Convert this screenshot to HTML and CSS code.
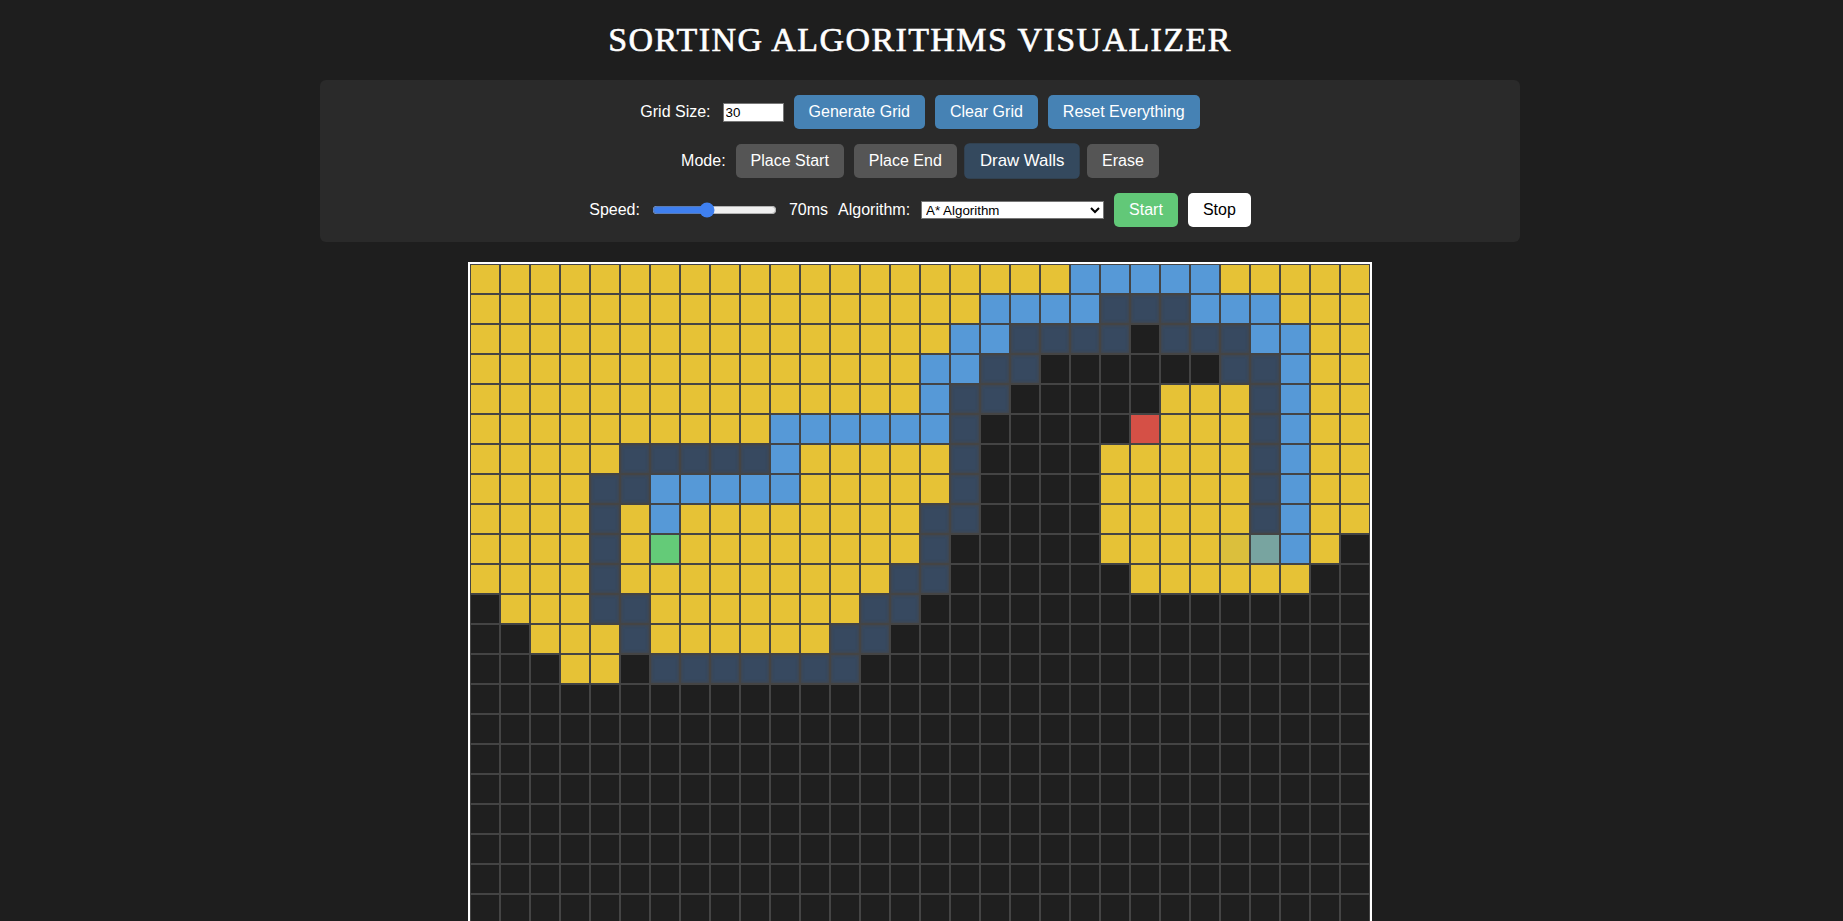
FILE: index.html
```html
<!DOCTYPE html>
<html lang="en">
<head>
<meta charset="utf-8">
<title>Sorting Algorithms Visualizer</title>
<link rel="stylesheet" href="styles.css">
</head>
<body>
<h1 class="title">SORTING ALGORITHMS VISUALIZER</h1>
<div class="controls">
  <div class="row">
    <label class="label" for="size">Grid Size:</label>
    <input class="size-input" id="size" type="text" value="30">
    <button class="btn btn-blue">Generate Grid</button>
    <button class="btn btn-blue">Clear Grid</button>
    <button class="btn btn-blue">Reset Everything</button>
  </div>
  <div class="row">
    <span class="label">Mode:</span>
    <button class="btn btn-gray">Place Start</button>
    <button class="btn btn-gray">Place End</button>
    <button class="btn btn-gray btn-active">Draw Walls</button>
    <button class="btn btn-gray">Erase</button>
  </div>
  <div class="row">
    <label class="label" for="speed">Speed:</label>
    <input class="speed" id="speed" type="range" min="10" max="150" value="70">
    <span class="label">70ms</span>
    <label class="label" for="algo">Algorithm:</label>
    <select class="algo" id="algo">
      <option>A* Algorithm</option>
      <option>Dijkstra's Algorithm</option>
      <option>Breadth-First Search</option>
      <option>Depth-First Search</option>
    </select>
    <button class="btn btn-green">Start</button>
    <button class="btn btn-white">Stop</button>
  </div>
</div>
<div class="grid" id="grid"></div>
<script src="script.js"></script>
</body>
</html>
```

FILE: styles.css
```css
html, body {
  margin: 0;
  padding: 0;
}
body {
  background: #1e1e1e;
  color: #fff;
  font-family: "Liberation Sans", Arial, sans-serif;
  padding-right: 3px;
}
.title {
  margin: 20px 0;
  text-align: center;
  font-family: "Liberation Serif", "Times New Roman", serif;
  font-weight: 400;
  font-size: 34px;
  line-height: 40px;
  letter-spacing: 1.4px;
  color: #fff;
  -webkit-text-stroke: 0.6px #fff;
}
.controls {
  width: 1200px;
  margin: 0 auto;
  box-sizing: border-box;
  background: #2a2a2a;
  border-radius: 6px;
  padding: 15px;
  display: flex;
  flex-direction: column;
  gap: 15px;
}
.row {
  display: flex;
  justify-content: center;
  align-items: center;
  gap: 10px;
  height: 34px;
}
.label {
  font-size: 16px;
  color: #fff;
}
.size-input {
  width: 61px;
  height: 19px;
  box-sizing: border-box;
  border: 1px solid #767676;
  padding: 1px 2px;
  font-family: "Liberation Sans", Arial, sans-serif;
  font-size: 13.33px;
  color: #000;
  background: #fff;
  margin-left: 2px;
}
.btn {
  font-family: "Liberation Sans", Arial, sans-serif;
  font-size: 16px;
  line-height: 18px;
  padding: 8px 15px;
  border: none;
  border-radius: 5px;
  color: #fff;
  cursor: pointer;
}
.btn-blue { background: #4682b4; }
.btn-gray { background: #555555; }
.btn-active {
  background: #34495e;
  transform: scale(1.05);
}
.btn-green { background: #62c878; }
.btn-white { background: #ffffff; color: #000; }
.speed {
  width: 125px;
  margin: 2px;
  accent-color: #3f80f0;
}
.algo {
  width: 183px;
  height: 18px;
  font-family: "Liberation Sans", Arial, sans-serif;
  font-size: 13.33px;
  padding: 0;
  border: 1px solid #767676;
  background: #fff;
  color: #000;
  margin-left: 1px;
}
.grid {
  width: 900px;
  margin: 20px auto 0;
  border: 2px solid #fff;
  display: grid;
  grid-template-columns: repeat(30, 30px);
  grid-auto-rows: 30px;
}
.cell {
  box-sizing: border-box;
  border: 1px solid #444444;
  background: #1f1f1f;
}
.cell-Y { background: #e6c236; }
.cell-B { background: #5699d7; }
.cell-N {
  background: #374960;
  box-shadow: inset 0 0 3px 1px rgba(70, 70, 70, 0.7);
}
.cell-S { background: #64cb78; }
.cell-R { background: #d55046; }
.cell-T { background: #78a4a0; }
.cell-K { background: #dbbf3c; }
```

FILE: script.js
```js
(function () {
  var map = [
    "YYYYYYYYYYYYYYYYYYYYBBBBBYYYYY",
    "YYYYYYYYYYYYYYYYYBBBBNNNBBBYYY",
    "YYYYYYYYYYYYYYYYBBNNNNENNNBBYY",
    "YYYYYYYYYYYYYYYBBNNEEEEEENNBYY",
    "YYYYYYYYYYYYYYYBNNEEEEEYYYNBYY",
    "YYYYYYYYYYBBBBBBNEEEEERYYYNBYY",
    "YYYYYNNNNNBYYYYYNEEEEYYYYYNBYY",
    "YYYYNNBBBBBYYYYYNEEEEYYYYYNBYY",
    "YYYYNYBYYYYYYYYNNEEEEYYYYYNBYY",
    "YYYYNYSYYYYYYYYNEEEEEYYYYKTBYE",
    "YYYYNYYYYYYYYYNNEEEEEEYYYYYYEE",
    "EYYYNNYYYYYYYNNEEEEEEEEEEEEEEE",
    "EEYYYNYYYYYYNNEEEEEEEEEEEEEEEE",
    "EEEYYENNNNNNNEEEEEEEEEEEEEEEEE"
  ];
  var grid = document.getElementById("grid");
  var frag = document.createDocumentFragment();
  for (var r = 0; r < 30; r++) {
    var row = map[r] || "";
    for (var c = 0; c < 30; c++) {
      var ch = row.charAt(c) || "E";
      var d = document.createElement("div");
      d.className = "cell" + (ch !== "E" ? " cell-" + ch : "");
      frag.appendChild(d);
    }
  }
  grid.appendChild(frag);
})();
```
